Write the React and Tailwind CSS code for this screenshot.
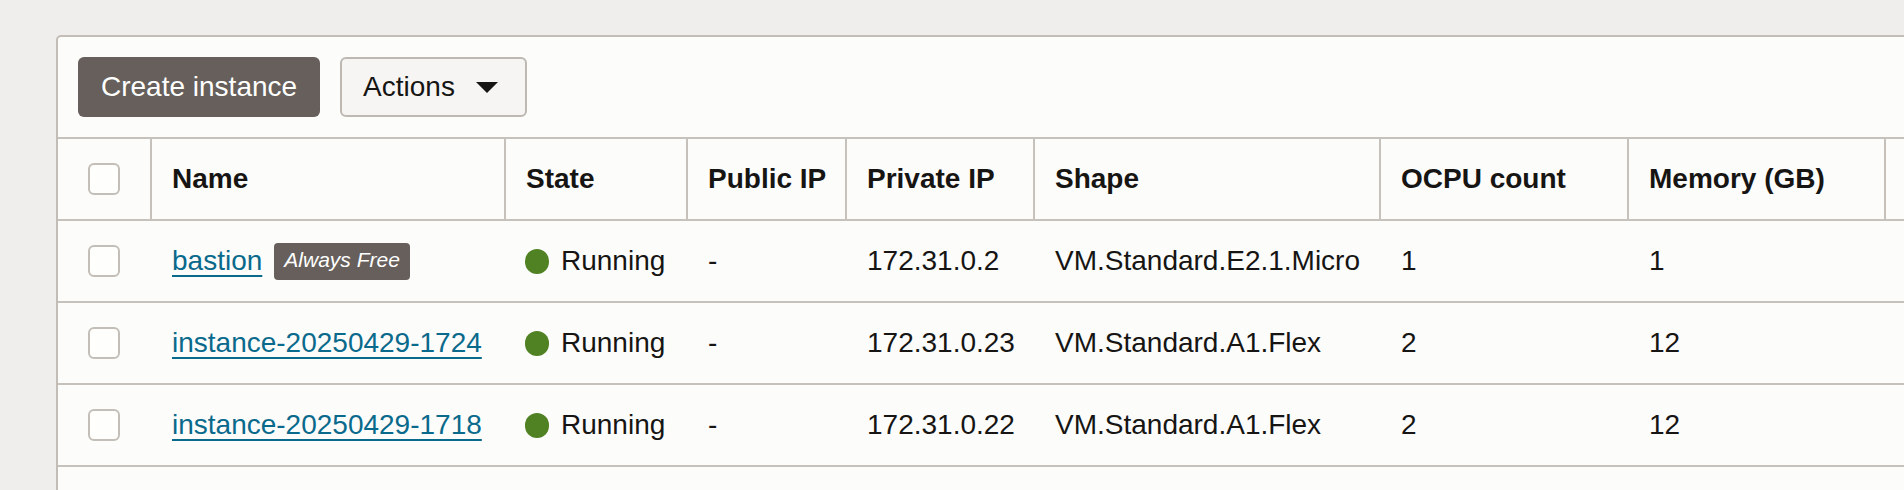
import React from "react";

const columns = [
    { key: "name", label: "Name", width: "w-[354px]" },
    { key: "state", label: "State", width: "w-[182px]" },
    { key: "publicIp", label: "Public IP", width: "w-[159px]" },
    { key: "privateIp", label: "Private IP", width: "w-[188px]" },
    { key: "shape", label: "Shape", width: "w-[346px]" },
    { key: "ocpu", label: "OCPU count", width: "w-[248px]" },
    { key: "memory", label: "Memory (GB)", width: "w-[257px]" },
    { key: "extra", label: "", width: "w-[240px]" },
];

const instances = [
    { id: 1, name: "bastion", free: true, publicIp: "-", privateIp: "172.31.0.2", shape: "VM.Standard.E2.1.Micro", ocpu: "1", memory: "1" },
    { id: 2, name: "instance-20250429-1724", free: false, publicIp: "-", privateIp: "172.31.0.23", shape: "VM.Standard.A1.Flex", ocpu: "2", memory: "12" },
    { id: 3, name: "instance-20250429-1718", free: false, publicIp: "-", privateIp: "172.31.0.22", shape: "VM.Standard.A1.Flex", ocpu: "2", memory: "12" },
];

function Checkbox() {
    return <div className="w-[32px] h-[32px] rounded-[6px] border-2 border-[#c3bfb8] bg-[#fefefd]" />;
}

function Cell({ col, children }) {
    return (
        <div className={`${col.width} shrink-0 h-full flex items-center pl-[22px]`}>
            {children}
        </div>
    );
}

export default function App() {
    return (
        <div
            className="w-[1904px] h-[490px] overflow-hidden bg-[#efeeec] pt-[35px] pl-[56px] text-[#161513]"
            style={{ fontFamily: '"Liberation Sans", Arial, sans-serif' }}
        >
            <div className="w-[2100px] h-[600px] bg-[#fcfcfb] border-2 border-[#c2bdb6] rounded-tl-[5px]">
                {/* toolbar */}
                <div className="flex gap-[20px] pl-[20px] pt-[20px] pb-[20px]">
                    <button className="h-[60px] px-[23px] rounded-[6px] bg-[#665f5b] text-white text-[28px]">
                        Create instance
                    </button>
                    <button className="h-[60px] w-[187px] pl-[21px] rounded-[6px] border-2 border-[#bdb8b1] bg-[#f6f5f3] text-[28px] flex items-center">
                        <span>Actions</span>
                        <svg className="ml-[21px]" width="22" height="11" viewBox="0 0 22 11">
                            <path d="M0 0 L22 0 L11 11 Z" fill="#161513" />
                        </svg>
                    </button>
                </div>

                {/* header */}
                <div className="flex h-[84px] border-y-2 border-[#c6c2bb]">
                    <div className="w-[92px] shrink-0 h-full flex items-center justify-center">
                        <Checkbox />
                    </div>
                    {columns.map((col) => (
                        <div
                            key={col.key}
                            className={`${col.width} shrink-0 h-full flex items-center pl-[20px] border-l-2 border-[#c6c2bb] text-[28px] font-bold`}
                        >
                            {col.label}
                        </div>
                    ))}
                </div>

                {/* rows */}
                {instances.map((inst) => (
                    <div key={inst.id} className="flex h-[82px] border-b-2 border-[#c6c2bb] text-[28px]">
                        <div className="w-[92px] shrink-0 h-full flex items-center justify-center">
                            <Checkbox />
                        </div>
                        <Cell col={columns[0]}>
                            <a href="#" className="text-[#0a6a8c] underline decoration-2 underline-offset-[5px]">
                                {inst.name}
                            </a>
                            {inst.free && (
                                <span className="ml-[12px] h-[37px] px-[10px] pt-[2px] rounded-[4px] bg-[#665f5b] text-white italic text-[21px] leading-[30px]">
                                    Always Free
                                </span>
                            )}
                        </Cell>
                        <Cell col={columns[1]}>
                            <span className="w-[24px] h-[25px] rounded-full bg-[#508223] mr-[12px] -ml-[1px]" />
                            Running
                        </Cell>
                        <Cell col={columns[2]}>{inst.publicIp}</Cell>
                        <Cell col={columns[3]}>{inst.privateIp}</Cell>
                        <Cell col={columns[4]}>{inst.shape}</Cell>
                        <Cell col={columns[5]}>{inst.ocpu}</Cell>
                        <Cell col={columns[6]}>{inst.memory}</Cell>
                        <Cell col={columns[7]} />
                    </div>
                ))}
            </div>
        </div>
    );
}
